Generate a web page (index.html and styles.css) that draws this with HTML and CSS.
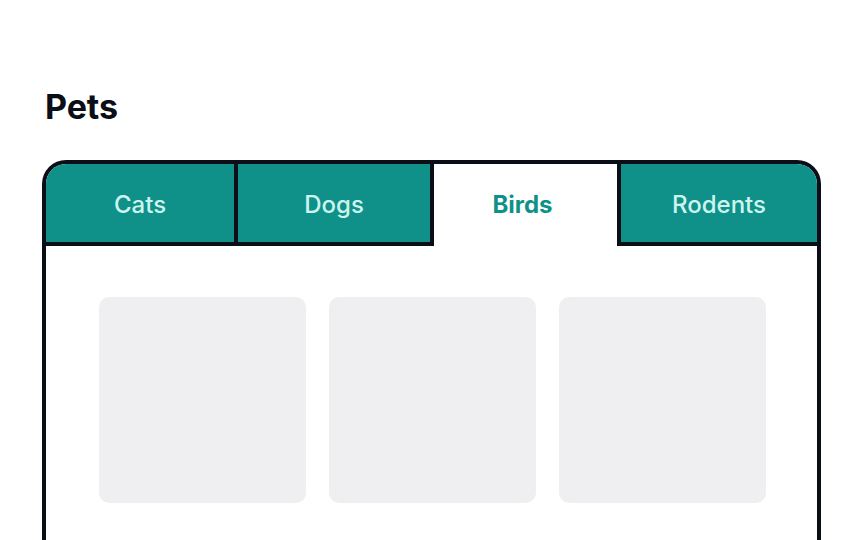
FILE: index.html
```html
<!DOCTYPE html>
<html lang="en">
<head>
<meta charset="utf-8">
<title>Pets</title>
<link rel="stylesheet" href="styles.css">
</head>
<body>
<main class="page">
  <h1 class="title">Pets</h1>
  <section class="tabs">
    <div class="tab-list" role="tablist">
      <button class="tab tab-cats" role="tab">Cats</button>
      <button class="tab tab-dogs" role="tab">Dogs</button>
      <button class="tab tab-birds is-active" role="tab" aria-selected="true">Birds</button>
      <button class="tab tab-rodents" role="tab">Rodents</button>
    </div>
    <div class="panel" role="tabpanel">
      <div class="card"></div>
      <div class="card"></div>
      <div class="card"></div>
    </div>
  </section>
</main>
</body>
</html>
```

FILE: styles.css
```css
* { box-sizing: border-box; }

html, body {
  margin: 0;
  padding: 0;
  background: #ffffff;
  overflow: hidden;
}

body {
  font-family: Inter, "Noto Sans", sans-serif;
  color: #0b0d17;
  width: 864px;
  height: 540px;
}

.page {
  padding: 87px 0 0 42px;
}

.title {
  margin: 0 0 33px 3px;
  font-size: 34px;
  line-height: 40px;
  font-weight: 700;
  color: #0b0d17;
  letter-spacing: -0.1px;
}

.tabs {
  width: 779px;
  height: 400px;
  border: 4px solid #0b0d17;
  border-bottom: none;
  border-radius: 24px 24px 0 0;
  overflow: hidden;
  background: #ffffff;
}

.tab-list {
  display: flex;
}

.tab {
  height: 82px;
  margin: 0;
  padding: 2px 0 0 0;
  border: none;
  border-right: 4px solid #0b0d17;
  border-bottom: 4px solid #0b0d17;
  background: #0f918a;
  color: #cdf5ee;
  font-family: Inter, "Noto Sans", sans-serif;
  font-size: 24px;
  font-weight: 500;
  display: flex;
  align-items: center;
  justify-content: center;
}

.tab-cats { width: 192px; }
.tab-dogs { width: 196px; }
.tab-birds { width: 187px; }
.tab-rodents { width: 196px; border-right: none; }

.tab.is-active {
  background: #ffffff;
  color: #0f918a;
  font-weight: 700;
  border-bottom: none;
  padding: 0 6px 4px 0;
  padding-top: 2px;
}

.panel {
  display: grid;
  grid-template-columns: repeat(3, 207px);
  column-gap: 23px;
  padding: 51px 52px 0 53px;
}

.card {
  height: 206px;
  background: #efeff1;
  border-radius: 10px;
}
```
